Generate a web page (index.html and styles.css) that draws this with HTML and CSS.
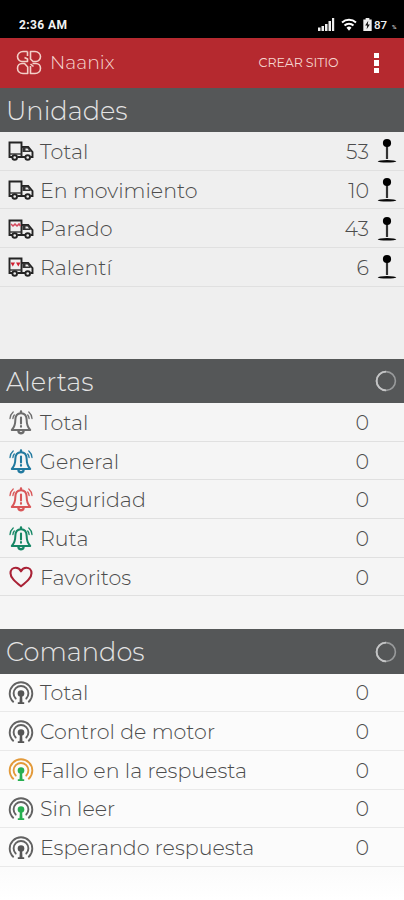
FILE: index.html
```
<!DOCTYPE html>
<html lang="es">
<head>
<meta charset="utf-8">
<meta name="viewport" content="width=device-width, initial-scale=1">
<title>Naanix</title>
<link rel="stylesheet" href="styles.css">
</head>
<body>
<svg class="defs" width="0" height="0" aria-hidden="true">
  <symbol id="truck" viewBox="0 0 26 20">
    <path d="M4 16H1.500V1.500H13.500V16H9.500M13.500 6h6.700l4.300 5v5h-2M13.500 16h3.500" fill="none" stroke="#242424" stroke-width="1.900"/>
    <path d="M14.500 6h5.500l3 5h-8.500z" fill="#333"/>
    <path d="M17.500 7.500h2l1.500 2h-3.500z" fill="#eee"/>
    <path d="M1 13h13" stroke="#333" stroke-width="1.400"/>
    <circle cx="6.700" cy="16.500" r="2.300" fill="#eee" stroke="#242424" stroke-width="1.900"/>
    <circle cx="19.700" cy="16.500" r="2.300" fill="#eee" stroke="#242424" stroke-width="1.900"/>
  </symbol>
  <symbol id="pin" viewBox="0 0 20 26">
    <path d="M10 5v16" stroke="#333" stroke-width="2.200"/>
    <circle cx="10" cy="5" r="4.100" fill="#000"/>
    <ellipse cx="10" cy="23.300" rx="9.300" ry="1.200" fill="#080808"/>
  </symbol>
  <symbol id="bell" viewBox="0 0 24 25">
    <g fill="none" stroke="currentColor" stroke-linecap="round">
      <path d="M12 3.300C7.500 3.300 6.300 7 6.300 10.500c0 4.500-.8 6.500-3.500 9.500h18.400c-2.700-3-3.500-5-3.500-9.500 0-3.500-1.200-7.200-5.700-7.200z" stroke-width="2" stroke-linejoin="round"/>
      <path d="M12 1.500v1.200M9.500 21.500c.6 2.300 4.400 2.300 5 0" stroke-width="2.400"/>
      <path d="M12 7.500v6M12 16v.7" stroke-width="2.100"/>
      <path d="M4.200 2C2.300 3.600 1.200 5.800 1 8.500M5.300 5C4.400 6.100 4 7.200 3.900 8.500M19.800 2c1.900 1.600 3 3.800 3.200 6.500M18.700 5c.9 1.100 1.300 2.200 1.400 3.500" stroke-width="1.300"/>
    </g>
  </symbol>
  <symbol id="heart" viewBox="0 0 24 22">
    <path d="M12 20.300C6 15.500 1.500 11.800 1.500 7.200c0-3.200 2.300-5.500 5.200-5.500 2.300 0 4.200 1.300 5.300 3.600 1.100-2.300 3-3.600 5.300-3.600 2.900 0 5.200 2.300 5.200 5.500 0 4.600-4.500 8.300-10.500 13.100z" fill="none" stroke="#a92135" stroke-width="2.100" stroke-linejoin="round"/>
  </symbol>
  <symbol id="waves" viewBox="0 0 26 24">
    <g fill="none" stroke="currentColor" stroke-width="1.900" stroke-linecap="round">
      <path d="M5.200 20.700A11.300 11.300 0 1 1 20.800 20.700"/>
      <path d="M7.700 17.500A7.400 7.400 0 1 1 18.300 17.500"/>
    </g>
    <g class="mast">
      <circle cx="13" cy="12.500" r="3.300"/>
      <path d="M11.900 14h2.200l.4 7.200h1.700v1.800H9.800v-1.800h1.700z"/>
    </g>
  </symbol>
</svg>

<div class="status">
  <span class="clock">2:36 AM</span>
  <svg class="signal" viewBox="0 0 17 13"><path d="M0 9.500h2.500V13H0zM3.500 8H6v5H3.500zM7 6h2.500v7H7zM10.500 3H13v10h-2.500zM14 0h2.200v13H14z" fill="#eee"/></svg>
  <svg class="wifi" viewBox="0 0 16 13"><g fill="none" stroke="#fff" stroke-width="2"><path d="M1 4.500a10.500 10.500 0 0 1 14 0M3.500 7.500a6.500 6.500 0 0 1 9 0"/></g><path d="M5.500 9.800a3.500 3.500 0 0 1 5 0L8 12.700z" fill="#fff"/></svg>
  <svg class="battery" viewBox="0 0 9 14"><path d="M2.500 0h4v1.700H9V14H0V1.700h2.500z" fill="#eee"/><path d="M5.300 3 2 8h2.200l-.6 4L7 7H4.800z" fill="#111"/></svg>
  <span class="level">87</span><span class="percent">%</span>
</div>

<header class="bar">
  <svg class="logo" viewBox="0 0 26 25" fill="none" stroke="#f3cfc8" stroke-width="1.600" stroke-linejoin="round">
    <path d="M11.500 1.500H7C4 1.500 1.500 3.800 1.500 6.500S3.500 11.500 6 11.500h5.500V9L8.500 7.500M11.500 1.500V6"/>
    <path d="M14.500 1.500H19c3 0 5.500 2.300 5.500 5s-2 5-4.500 5h-3l-2.500-2.500z"/>
    <path d="M11.700 23.500V17L8.500 13.500H6c-2.500 0-4.500 2-4.500 4.800s2.200 5.200 5.500 5.200z"/>
    <path d="M16.500 13.500H20c2.500 0 4.500 2 4.500 4.800s-2.200 5.200-5.500 5.200h-4.500V16M17.500 16.500l-3-2.500"/>
  </svg>
  <span class="brand">Naanix</span>
  <span class="create">CREAR SITIO</span>
  <span class="more"><i></i><i></i><i></i></span>
</header>

<section class="units">
  <h2>Unidades</h2>
  <ul>
    <li><svg class="truck"><use href="#truck"/></svg><span class="label">Total</span><span class="num">53</span><svg class="pin"><use href="#pin"/></svg></li>
    <li><svg class="truck"><use href="#truck"/></svg><span class="label">En movimiento</span><span class="num">10</span><svg class="pin"><use href="#pin"/></svg></li>
    <li><svg class="truck" viewBox="0 0 26 20"><use href="#truck" width="26" height="20"/><path d="M3 5l2 2 2-2 2 2 2-2 1.500 2" fill="none" stroke="#d4475b" stroke-width="1.500"/></svg><span class="label">Parado</span><span class="num">43</span><svg class="pin"><use href="#pin"/></svg></li>
    <li><svg class="truck" viewBox="0 0 26 20"><use href="#truck" width="26" height="20"/><path d="M2.500 5.500H7L4.800 9.500zM8 5.500h4.500L10.300 9.500z" fill="#cf1f30"/></svg><span class="label">Ralentí</span><span class="num">6</span><svg class="pin"><use href="#pin"/></svg></li>
  </ul>
</section>

<section class="alerts">
  <h2>Alertas<svg class="spinner" viewBox="0 0 22 22"><circle cx="11" cy="11" r="9.400"/><path d="M11 1.600a9.400 9.400 0 0 0 0 18.800"/></svg></h2>
  <ul>
    <li><svg class="bell grey"><use href="#bell"/></svg><span class="label">Total</span><span class="num zero">0</span></li>
    <li><svg class="bell blue"><use href="#bell"/></svg><span class="label">General</span><span class="num zero">0</span></li>
    <li><svg class="bell red"><use href="#bell"/></svg><span class="label">Seguridad</span><span class="num zero">0</span></li>
    <li><svg class="bell green"><use href="#bell"/></svg><span class="label">Ruta</span><span class="num zero">0</span></li>
    <li><svg class="heart"><use href="#heart"/></svg><span class="label">Favoritos</span><span class="num zero">0</span></li>
  </ul>
</section>

<section class="commands">
  <h2>Comandos<svg class="spinner" viewBox="0 0 22 22"><circle cx="11" cy="11" r="9.400"/><path d="M11 1.600a9.400 9.400 0 0 0 0 18.800"/></svg></h2>
  <ul>
    <li><svg class="waves"><use href="#waves"/></svg><span class="label">Total</span><span class="num zero">0</span></li>
    <li><svg class="waves"><use href="#waves"/></svg><span class="label">Control de motor</span><span class="num zero">0</span></li>
    <li><svg class="waves orange live"><use href="#waves"/></svg><span class="label">Fallo en la respuesta</span><span class="num zero">0</span></li>
    <li><svg class="waves live"><use href="#waves"/></svg><span class="label">Sin leer</span><span class="num zero">0</span></li>
    <li><svg class="waves"><use href="#waves"/></svg><span class="label">Esperando respuesta</span><span class="num zero">0</span></li>
  </ul>
</section>
</body>
</html>
```
FILE: styles.css
```
* { box-sizing: border-box; }
body {
  margin: 0;
  height: 900px;
  overflow: hidden;
  background: #fff;
  font-family: Montserrat, Inter, sans-serif;
  font-weight: 300;
  color: #4c4c4c;
}
svg { flex: none; display: block; }
.defs { position: absolute; }

.status {
  display: flex;
  align-items: center;
  height: 38px;
  padding: 11px 6px 0 19px;
  background: #000;
  color: #f2f2f2;
}
.clock { flex: 1; font: 700 12px Roboto, sans-serif; letter-spacing: .4px; }
.signal { width: 17px; height: 13px; }
.wifi { width: 16px; height: 13px; margin-left: 6px; }
.battery { width: 9px; height: 13px; margin-left: 6px; }
.level { margin-left: 2px; font: 500 11.500px Roboto, sans-serif; }
.percent { width: 6px; margin-left: 5px; font: 6px Roboto, sans-serif; padding-top: 3px; }

.bar {
  display: flex;
  align-items: center;
  height: 49.500px;
  padding: 0 25px 0 16px;
  background: #b5292f;
  color: #f5d6d0;
}
.logo { width: 26px; height: 25px; }
.brand { margin-left: 8px; flex: 1; font-size: 18.800px; }
.create { font-size: 12.600px; font-weight: 400; letter-spacing: -.1px; margin-right: 35px; }
.more { display: grid; gap: 2px; }
.more i { width: 5.500px; height: 5.500px; background: #fff; }

h2 {
  display: flex;
  align-items: center;
  justify-content: space-between;
  height: 44.500px;
  margin: 0;
  padding: 1px 7px 0 6px;
  background: #555758;
  color: #e4e4e4;
  font-size: 25.700px;
  font-weight: 300;
}
.spinner { width: 22px; height: 22px; fill: none; stroke: #999b9c; stroke-width: 1.600; }
.spinner path { stroke: #c4c5c6; stroke-width: 1.900; }

ul { list-style: none; margin: 0; padding: 0; }
li {
  display: flex;
  align-items: center;
  height: 38.700px;
  padding: 1px 7px 0 8px;
  border-bottom: 1px solid #e0e0e0;
  font-size: 20.600px;
}
.units { height: 271px; background: #efefef; }
.alerts { height: 270.500px; background: #f5f5f5; }
.commands { height: 271px; background: linear-gradient(#fbfbfb 240px, #fff); }
.commands li { border-color: #e9e9e9; }

.truck, .waves { width: 26px; height: 24px; margin-right: 6px; }
.truck { height: 20px; }
.bell { width: 24px; height: 25px; margin: 0 7px 0 1px; }
.heart { width: 24px; height: 22px; margin: 0 7px 0 1px; }
.pin { width: 20px; height: 26px; margin-left: 8px; }
.grey { color: #6c6c6c; }
.blue { color: #21799f; }
.red { color: #d95658; }
.green { color: #168765; }
.waves { color: #626262; fill: #555; }
.orange { color: #e39a3a; }
.live { fill: #27af50; }

.label { flex: 1; white-space: nowrap; }
.zero { margin-right: 28px; }
```
